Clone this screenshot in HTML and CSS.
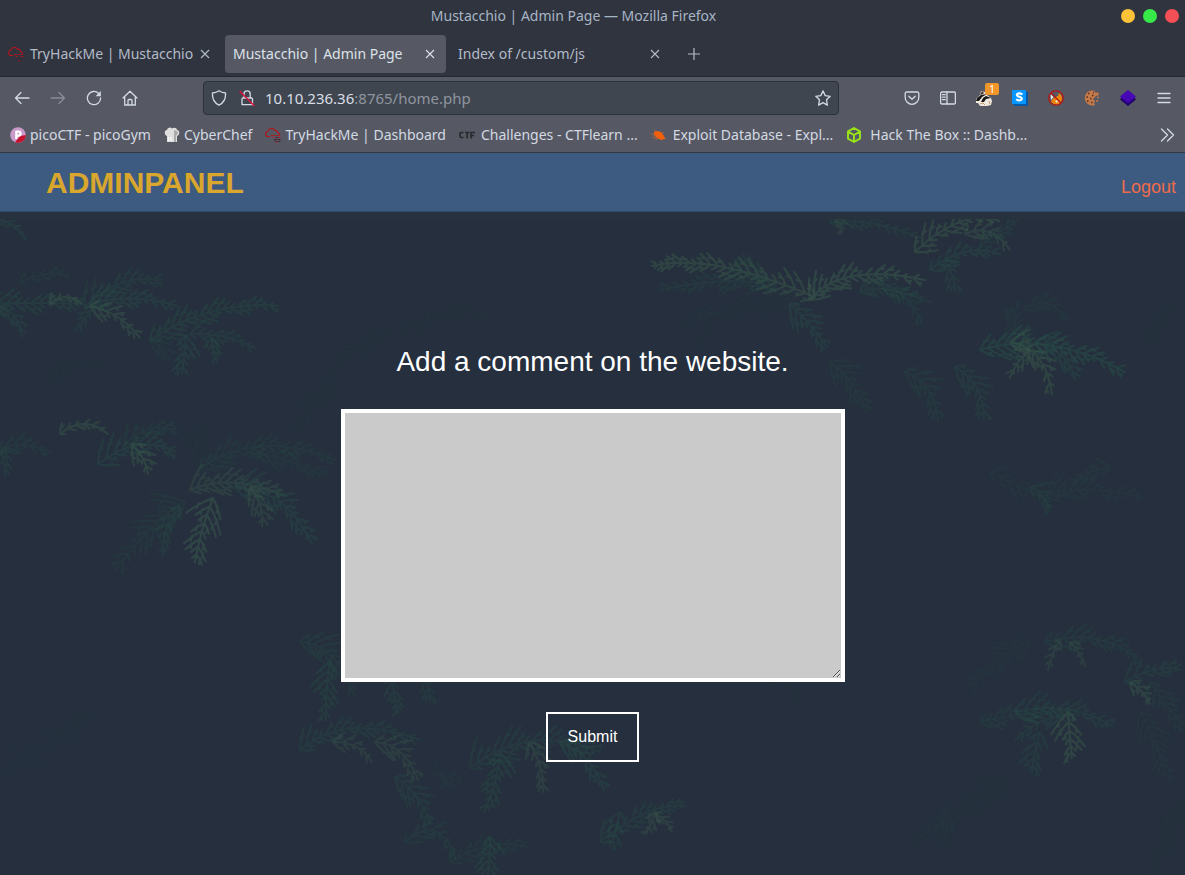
FILE: index.html
```html
<!DOCTYPE html>
<html lang="en">
<head>
<meta charset="utf-8">
<title>Mustacchio | Admin Page</title>
<link rel="stylesheet" href="styles.css">
</head>
<body>
<svg class="defs" aria-hidden="true">
  <symbol id="cloud" viewBox="0 0 16 16">
    <path d="M5 9.500H3.500a2.600 2.600 0 0 1-.4-5.200A3.300 3.300 0 0 1 9.300 3.200 2.600 2.600 0 0 1 12.500 6a1.800 1.800 0 0 1 2.300 1.300M6.500 8.500h2" fill="none" stroke="#b3151d" stroke-width="1.100"/>
    <path d="M10 8.500h1.500M13 8.500h1.500M8 10.500h1M13.500 10.500h1.500M11 15h1" stroke="#b3151d" stroke-width="1.100"/>
    <path d="M9.500 12.500h2M13 12.500h2M10 14h1M13 14.500h2M11 10.500h1.500" stroke="#3c2b37" stroke-width="1.200"/>
  </symbol>
  <symbol id="close" viewBox="0 0 10 10"><path d="M1 1l8 8M9 1L1 9" fill="none" stroke="currentColor" stroke-width="1.100"/></symbol>
</svg>

<header class="browser">
  <div class="titlebar">
    <span class="window-title">Mustacchio | Admin Page — Mozilla Firefox</span>
    <div class="window-buttons">
      <button class="dot dot-yellow" aria-label="Minimize"></button>
      <button class="dot dot-green" aria-label="Maximize"></button>
      <button class="dot dot-red" aria-label="Close window"></button>
    </div>
  </div>

  <div class="tabs">
    <div class="tab">
      <svg class="icon tab-icon"><use href="#cloud"/></svg>
      <span class="tab-label">TryHackMe | Mustacchio</span>
      <button class="tab-close" aria-label="Close tab"><svg><use href="#close"/></svg></button>
    </div>
    <div class="tab tab-active">
      <span class="tab-label">Mustacchio | Admin Page</span>
      <button class="tab-close" aria-label="Close tab"><svg><use href="#close"/></svg></button>
    </div>
    <div class="tab">
      <span class="tab-label">Index of /custom/js</span>
      <button class="tab-close" aria-label="Close tab"><svg><use href="#close"/></svg></button>
    </div>
    <button class="new-tab" aria-label="New tab"><svg viewBox="0 0 14 14"><path d="M7 1v12M1 7h12" stroke="currentColor" stroke-width="1.200"/></svg></button>
  </div>

  <div class="toolbar">
    <div class="nav-buttons">
      <button class="tool" aria-label="Back"><svg class="icon" viewBox="0 0 16 16"><path d="M15 8H1.500M7 2.500L1.500 8 7 13.500"/></svg></button>
      <button class="tool tool-off" aria-label="Forward"><svg class="icon" viewBox="0 0 16 16"><path d="M1 8h13.500M9 2.500L14.500 8 9 13.500"/></svg></button>
      <button class="tool" aria-label="Reload"><svg class="icon" viewBox="0 0 16 16"><path d="M12.500 3.200A6.600 6.600 0 1 0 14.600 8"/><path d="M14.800 1v5.200H9.600z" fill="currentColor" stroke="none"/></svg></button>
      <button class="tool" aria-label="Home"><svg class="icon" viewBox="0 0 16 16"><path d="M1 8l7-6.800L15 8M2.700 6.800V15h10.600V6.800M6 15v-4.500a1 1 0 0 1 1-1h2a1 1 0 0 1 1 1V15"/></svg></button>
    </div>
    <div class="address">
      <svg class="icon" viewBox="0 0 16 16"><path d="M8 .8c2 1.500 4.200 2 6.500 2.200.4 5.500-1.500 9.700-6.500 12.200C3 12.700 1.100 8.500 1.500 3 3.800 2.800 6 2.300 8 .8z"/></svg>
      <svg class="icon" viewBox="0 0 16 16"><path d="M5 8V4a3.100 3.100 0 0 1 6.200 0v4M3 14.700V9a1 1 0 0 1 1-1h8.500a1 1 0 0 1 1 1v5.700z"/><path d="M1 1.500l14 14" stroke="#e0123f" stroke-width="1.400"/></svg>
      <p class="url"><span class="host">10.10.236.36</span>:8765/home.php</p>
      <button class="tool star" aria-label="Bookmark this page"><svg class="icon" viewBox="0 0 16 16"><path d="M8 .9l2.200 4.700 5 .7-3.700 3.500.9 5.300L8 12.600l-4.400 2.500.9-5.300L.8 6.300l5-.7z"/></svg></button>
    </div>
    <div class="extensions">
      <button class="tool" aria-label="Pocket"><svg class="icon" viewBox="0 0 16 16"><path d="M2.500 2h11a1.300 1.300 0 0 1 1.300 1.300V7.500a6.800 6.800 0 0 1-13.600 0V3.300A1.300 1.300 0 0 1 2.500 2zM4.800 6.300L8 9.300l3.200-3"/></svg></button>
      <button class="tool" aria-label="Sidebar"><svg class="icon" viewBox="0 0 16 16"><rect x=".6" y="2" width="14.800" height="12" rx="1.300"/><path d="M7 2v12M2.500 4.700h2.800M2.500 7.200h2.800M2.500 9.700h2.800"/></svg></button>
      <button class="tool badge-host" aria-label="Privacy Badger">
        <svg class="icon plain" viewBox="0 0 16 16"><path d="M0 9l4-4 1-4 4 1 2 3 4 3 1 3-1 4-4 1H4l-2-3H0z" fill="#eee8df"/><path d="M0 11l1-3 4-3 6-1-5 3-3 4zM5 12l2-4 3-2 5 2-5 1-2 3z" fill="#171717"/><path d="M4 5l2-4 2 2-1 1z" fill="#4b3529"/><path d="M4 14l3-1 2 2M13 11l1 3" stroke="#c99a70" stroke-width="1" fill="none"/></svg>
        <span class="badge">1</span>
      </button>
      <button class="tool" aria-label="Stylus"><svg class="icon plain" viewBox="0 0 16 16"><path d="M2 2h14v14H2z" fill="#0757a5"/><path d="M0 0h14v14H0z" fill="#0796ff"/><path d="M10.300 4.500C9 2.900 4.800 3 4.800 5c0 2 5 1.400 5 3.600 0 2.300-4 2.300-5.600.7" fill="none" stroke="#fff" stroke-width="2.100"/></svg></button>
      <button class="tool" aria-label="FoxyProxy"><svg class="icon plain" viewBox="0 0 16 16"><path d="M3 12c1-3 3-5 7-6l1-3 2 2c2 3 1 7-2 9-3 1-6 0-8-2z" fill="#ed860f"/><path d="M2.500 4l3 3L3 10zM7 11l3-1-1 3z" fill="#eee"/><circle cx="8" cy="8" r="7.200" fill="none" stroke="#b51416" stroke-width="1.300"/><path d="M3 3l10 10" stroke="#b51416" stroke-width="1.300"/></svg></button>
      <button class="tool" aria-label="Cookies"><svg class="icon plain" viewBox="0 0 16 16"><path d="M10 .7A7.500 7.500 0 1 0 11 15l-1-2 1-2-2-2 3-3 3-1-1-3-2 1z" fill="#c57848"/><path d="M4 3.500h1.500M8 5.500h1.500M2.500 7h1.500M6 8.500h1.500M3 11h1.500M7 12.500h1.500M9 2.500h1" stroke="#542f25" stroke-width="1.500"/><path d="M12 11h2M13 7.500h2" stroke="#c57848" stroke-width="1.600"/></svg></button>
      <button class="tool" aria-label="Wappalyzer"><svg class="icon plain" viewBox="0 0 16 16"><path d="M0 9.500L8 16l8-6.500-3-3.500H3z" fill="#24006f"/><path d="M0 6.500L8 0l8 6.500L8 13z" fill="#4608b4"/></svg></button>
      <button class="tool" aria-label="Menu"><svg class="icon" viewBox="0 0 16 16"><path d="M2 3.500h12M2 8h12M2 12.500h12"/></svg></button>
    </div>
  </div>

  <nav class="bookmarks" aria-label="Bookmarks">
    <a href="#"><svg class="icon plain" viewBox="0 0 16 16"><circle cx="8" cy="8" r="7.800" fill="#c99ac9"/><path d="M15.800 8A7.800 7.800 0 0 1 5 15.200L10 9z" fill="#c5102e"/><path d="M6.300 12V4.600h2.200a2 2 0 0 1 0 4.100H6.300" fill="none" stroke="#fff" stroke-width="2.200"/></svg>picoCTF - picoGym</a>
    <a href="#"><svg class="icon plain" viewBox="0 0 16 16"><path d="M3 9C0 8 0 3 3 3c1-3 4-3 5-1.500C10 0 13 1 13 3c3 0 3 5 0 6v6H3z" fill="#dedede"/><path d="M10 3l3 1c2 2 0 4-1 5v6h-2z" fill="#aaa"/><path d="M4.500 10v4M7 10v4" stroke="#f7f7f7"/></svg>CyberChef</a>
    <a href="#"><svg class="icon"><use href="#cloud"/></svg>TryHackMe | Dashboard</a>
    <a class="medium" href="#"><svg class="icon plain" viewBox="0 0 16 16"><path d="M4.500 5.500H2.200Q1 5.500 1 6.700v2.600q0 1.200 1.200 1.200h2.300M6 5.500h4.500M8.200 5.500v6M12 11.500v-6h4M12 8.500h3" fill="none" stroke="#292a2d" stroke-width="1.700"/></svg>Challenges - CTFlearn ...</a>
    <a class="medium" href="#"><svg class="icon plain" viewBox="0 0 16 16"><path d="M3 5l3-1 4 1 3 4 1 3-4 1-4-2-3-3z" fill="#f2600c"/><path d="M0 7l5 1M1 11l5-1M4 13l4-2M11 7l2-2M3 3l3 2M13 10l2 2" stroke="#b8623b" stroke-width=".8"/></svg>Exploit Database - Expl...</a>
    <a class="wide" href="#"><svg class="icon plain" viewBox="0 0 16 16"><path d="M8 1l6 3.400v7.200L8 15l-6-3.400V4.400zM2 4.700L8 8l6-3.300M8 8v7" fill="none" stroke="#9be516" stroke-width="1.900"/></svg>Hack The Box :: Dashb...</a>
    <button class="tool overflow" aria-label="More bookmarks"><svg class="icon" viewBox="0 0 16 16"><path d="M2.500 2l6 6-6 6M8.500 2l6 6-6 6"/></svg></button>
  </nav>
</header>

<div class="page">
  <svg class="foliage" id="foliage" viewBox="0 0 1185 664" preserveAspectRatio="xMidYMin slice" aria-hidden="true"></svg>
  <nav class="navbar">
    <a class="brand" href="#">ADMINPANEL</a>
    <a class="logout" href="#">Logout</a>
  </nav>
  <main class="content">
    <form class="comment-form">
      <label for="comment">Add a comment on the website.</label>
      <textarea id="comment"></textarea>
      <button class="submit" type="button">Submit</button>
    </form>
  </main>
</div>
<script src="foliage.js"></script>
</body>
</html>
```
FILE: styles.css
```css
* { box-sizing: border-box; }

body {
  margin: 0;
  min-height: 100vh;
  display: flex;
  flex-direction: column;
  background: #262e3d;
  font-family: "Liberation Sans", Arial, sans-serif;
}

button {
  margin: 0;
  padding: 0;
  border: 0;
  background: none;
  color: inherit;
  font: inherit;
}

a { text-decoration: none; color: inherit; }
svg { display: block; }
.defs { position: absolute; width: 0; height: 0; }

.icon {
  width: 16px;
  height: 16px;
  flex: none;
  fill: none;
  stroke: currentColor;
  stroke-width: 1.3;
  stroke-linecap: round;
  stroke-linejoin: round;
}
.plain { stroke: none; stroke-linecap: butt; }

/* Browser chrome */
.browser {
  background: #565863;
  color: #d3dae3;
  font: 14px/20px "Noto Sans", sans-serif;
  border-bottom: 1px solid #343844;
}

.titlebar {
  display: grid;
  grid-template-columns: 1fr auto 1fr;
  align-items: center;
  height: 32px;
  padding: 0 6px 0 0;
  background: #2f343f;
  color: #a8b5c5;
}
.window-title { grid-column: 2; margin-right: 32px; }
.window-buttons { display: flex; justify-content: flex-end; gap: 8px; }
.dot { width: 14px; height: 14px; border-radius: 50%; }
.dot-yellow { background: #fbc338; }
.dot-green { background: #37e849; }
.dot-red { background: #f34f56; }

.tabs {
  display: flex;
  align-items: center;
  gap: 4px;
  height: 45px;
  padding-bottom: 1px;
  background: #2f343f;
  border-bottom: 1px solid #232730;
  color: #b3bbc7;
}
.tab {
  display: flex;
  align-items: center;
  width: 221px;
  height: 38px;
  padding: 0 11px 0 8px;
  border-radius: 4px;
}
.tab-active { background: #565963; color: #dce2ea; }
.tab-icon { margin-right: 6px; }
.tab-label { flex: 1; white-space: nowrap; }
.tab-close svg { width: 10px; height: 10px; }
.new-tab { margin-left: 12px; }
.new-tab svg { width: 14px; height: 14px; }

.toolbar { display: flex; align-items: center; height: 42px; }
.nav-buttons, .extensions { display: flex; gap: 20px; }
.nav-buttons { padding-left: 14px; }
.extensions { padding-right: 13px; }
.tool-off { opacity: .4; }
.address {
  flex: 1;
  display: flex;
  align-items: center;
  gap: 12px;
  height: 34px;
  margin: 0 65px;
  padding: 0 7px;
  background: #40464f;
  border: 1px solid #2c323d;
  border-radius: 4px;
}
.url { flex: 1; margin: 0 0 0 -2px; color: #8f959f; font-size: 15px; }
.host { color: #d8dee7; }

.badge-host { position: relative; }
.badge {
  position: absolute;
  top: -7px;
  right: -7px;
  width: 14px;
  height: 12px;
  border-radius: 2px;
  background: #f0962a;
  color: #fff;
  font-size: 10px;
  line-height: 12px;
}

.bookmarks {
  display: flex;
  align-items: center;
  gap: 13px;
  height: 33px;
  padding: 0 10px 2px;
  white-space: nowrap;
}
.bookmarks a { display: flex; align-items: center; gap: 4px; }
.bookmarks .medium { gap: 6px; }
.bookmarks .wide { gap: 8px; }
.overflow { margin-left: auto; }

/* Admin page */
.page {
  position: relative;
  flex: 1;
  display: flex;
  flex-direction: column;
  background: #252f3d;
}
.foliage { position: absolute; top: 59px; left: 0; width: 100%; height: calc(100% - 59px); }
.navbar {
  position: relative;
  display: flex;
  align-items: center;
  justify-content: space-between;
  height: 59px;
  padding: 2px 9px 0 46px;
  background: #3d5a80;
  border-bottom: 1px solid #324a69;
  box-shadow: 0 7px 0 #28323f;
}
.brand { color: #d9a62e; font-size: 30px; font-weight: bold; }
.logout { padding-top: 8px; color: #ee6c4d; font-size: 18px; }

.content {
  position: relative;
  flex: 1;
  display: flex;
  justify-content: center;
  padding-top: 134px;
}
.comment-form { display: flex; flex-direction: column; align-items: center; }
.comment-form label { color: #fff; font-size: 28px; line-height: 32px; }
textarea {
  width: 504px;
  max-width: 100%;
  height: 273px;
  margin-top: 31px;
  border: 4px solid #fff;
  background: #cacaca;
  font: 16px "Liberation Sans", Arial, sans-serif;
}
.submit {
  margin-top: 30px;
  padding: 14px 20px;
  border: 2px solid #fff;
  color: #fff;
  font-size: 16px;
  line-height: 18px;
}
```
FILE: foliage.js
```js
// Each spray: [base x, base y, bend x, bend y, tip x, tip y, spread, opacity, colour index]
const sprays = [
  [-20,92,40,90,82,92,22,.55,0],[0,95,20,102,22,125,16,.5,0],[20,70,55,55,70,66,14,.35,0],
  [50,92,66,78,82,92,10,.7,1],[85,95,120,60,163,68,24,.5,0],[90,92,130,80,177,94,20,.6,0],
  [90,94,120,100,140,126,18,.7,1],[95,95,85,105,76,118,13,.5,0],[150,128,210,88,278,94,24,.55,0],
  [190,122,225,120,255,136,17,.5,0],[186,124,184,145,182,162,22,.6,0],[212,126,212,140,217,150,14,.55,0],
  [150,130,170,135,165,150,18,.3,0],[-5,8,12,6,26,28,9,.6,0],
  [-8,240,15,225,50,240,20,.4,0],[60,222,84,202,108,222,12,.7,1],[125,232,155,205,177,222,18,.4,0],
  [98,252,140,220,176,240,26,.6,0],[132,232,146,246,148,262,20,.75,1],[5,235,8,252,5,264,11,.5,0],
  [200,256,260,216,335,248,24,.35,0],[250,240,290,245,325,265,22,.3,0],
  [190,278,230,260,285,284,26,.6,1],[235,276,285,275,312,332,28,.6,0],[213,286,200,320,195,350,30,.8,1],
  [185,290,155,305,116,358,34,.35,0],[250,275,265,295,262,314,22,.6,1],[180,295,160,320,163,344,18,.45,0],
  [105,150,60,155,50,165,24,.15,0],[180,216,210,240,235,280,36,.18,0],
  [340,170,315,180,292,225,26,.2,0],[400,120,450,90,490,104,24,.18,0],[395,122,350,130,330,162,22,.2,0],
  [815,85,710,40,652,54,24,.75,1],[765,72,725,64,660,78,22,.4,0],[775,78,750,45,735,48,16,.4,0],
  [810,88,840,50,925,68,24,.8,1],[860,80,880,70,930,90,18,.5,0],[790,92,810,110,827,135,24,.6,0],
  [880,70,910,80,922,112,20,.4,0],[795,86,760,90,680,110,25,.2,0],
  [830,10,870,5,920,26,15,.45,0],[835,8,845,14,840,22,10,.5,1],
  [915,40,960,-4,1015,4,22,.75,1],[965,22,990,10,1010,38,18,.65,1],
  [930,58,965,30,1000,42,18,.6,0],[945,48,955,65,955,80,20,.5,0],
  [980,34,1000,20,1018,8,16,.4,0],[700,100,720,120,695,138,15,.15,0],
  [830,150,855,168,866,200,25,.35,0],[905,160,934,170,938,208,26,.4,0],[955,155,985,172,984,208,25,.5,0],
  [980,138,1050,118,1125,160,28,.75,0],[1010,130,1045,135,1052,182,24,.75,1],
  [1035,130,1070,140,1075,168,22,.6,0],[1030,138,1015,150,1010,166,16,.7,1],
  [1010,130,1020,108,1012,94,26,.3,0],[1025,98,1045,80,1068,108,20,.3,0],
  [1145,130,1160,120,1175,90,30,.15,0],[990,260,1030,280,1050,290,22,.25,0],
  [1030,275,1048,285,1050,300,18,.4,0],[1045,284,1080,270,1145,286,24,.28,0],
  [1110,255,1080,260,1072,272,15,.35,0],
  [300,430,335,430,355,485,28,.4,0],[330,450,325,480,326,508,24,.55,0],[390,450,395,490,397,502,18,.5,0],
  [420,450,430,475,430,490,20,.4,0],[300,538,345,500,420,528,22,.45,0],
  [333,530,360,530,372,550,15,.55,1],[375,530,405,532,418,568,24,.55,1],
  [395,565,420,580,430,612,26,.5,0],[455,560,450,590,435,550,18,.25,0],
  [470,556,530,510,600,540,30,.5,0],[500,540,498,570,484,600,24,.55,0],
  [530,530,545,560,543,580,18,.6,1],[560,530,590,540,604,578,22,.6,0],
  [405,630,440,600,456,648,20,.4,0],[450,650,490,625,528,635,20,.35,0],
  [490,625,490,650,486,680,24,.55,0],[600,630,650,590,685,594,20,.5,0],
  [655,600,650,618,644,622,12,.6,1],[655,602,668,608,672,620,10,.6,1],[620,600,615,625,610,634,20,.5,0],
  [1045,430,1100,415,1140,448,22,.4,0],[1060,428,1052,440,1048,458,12,.55,1],
  [1030,430,1000,440,970,478,27,.22,0],[1070,430,1080,440,1085,454,10,.5,1],
  [1015,500,1070,488,1112,514,24,.45,0],[1068,500,1070,530,1072,546,26,.75,1],
  [980,510,1020,500,1075,498,18,.4,0],[1040,520,1033,545,1032,560,24,.5,0],
  [1060,505,1040,505,1015,528,18,.45,0],[1125,470,1160,450,1180,458,20,.5,0],
  [1130,470,1145,480,1150,492,14,.7,1],[1150,470,1170,500,1190,520,22,.35,0],
  [1140,500,1160,530,1165,568,28,.25,0],[1010,570,960,590,910,635,34,.18,0],
  [945,600,940,620,946,632,25,.2,0],[1185,590,1165,620,1155,660,26,.15,0],
  [0,560,50,535,90,500,42,.1,0],[700,420,760,430,805,490,44,.1,0]
];
const colours = ["#285047", "#3a584b"];
const host = document.getElementById("foliage");
const NS = "http://www.w3.org/2000/svg";

sprays.forEach(([x0, y0, cx, cy, x1, y1, spread, opacity, tone], index) => {
  const length = Math.hypot(x1 - x0, y1 - y0);
  const count = Math.max(4, Math.round(length / 8));
  let d = `M${x0} ${y0}Q${cx} ${cy} ${x1} ${y1}`;
  for (let i = 0; i < count; i++) {
    const t = i / count;
    const u = 1 - t;
    const x = u * u * x0 + 2 * u * t * cx + t * t * x1;
    const y = u * u * y0 + 2 * u * t * cy + t * t * y1;
    const heading = Math.atan2(u * (cy - y0) + t * (y1 - cy), u * (cx - x0) + t * (x1 - cx));
    for (const side of [-1, 1]) {
      const reach = spread * (1 - t * .65) * (.75 + .35 * Math.sin(i * 5 + index + side * 2));
      const angle = heading + side * .85;
      const mx = x + Math.cos(angle) * reach * .5;
      const my = y + Math.sin(angle) * reach * .5;
      const ex = x + Math.cos(angle - side * .15) * reach;
      const ey = y + Math.sin(angle - side * .15) * reach;
      d += `M${x} ${y}Q${mx} ${my} ${ex} ${ey}`;
      if (reach > 9) {
        d += `M${mx} ${my}l${Math.cos(heading) * 5} ${Math.sin(heading) * 5}`;
      }
    }
  }
  const path = document.createElementNS(NS, "path");
  path.setAttribute("d", d);
  path.setAttribute("fill", "none");
  path.setAttribute("stroke", colours[tone]);
  path.setAttribute("stroke-width", "2.200");
  path.setAttribute("stroke-linecap", "round");
  path.setAttribute("opacity", opacity * .65);
  host.appendChild(path);
});
```
